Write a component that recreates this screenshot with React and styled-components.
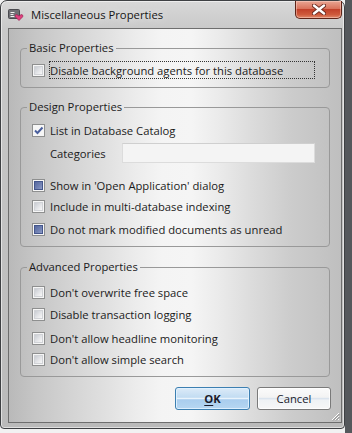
import React from "react";
import styled, { createGlobalStyle, css } from "styled-components";

const GlobalStyle = createGlobalStyle`
  html, body {
    margin: 0;
    padding: 0;
  }
  body {
    width: 352px;
    height: 433px;
    overflow: hidden;
    background: linear-gradient(to right, #f2f2f2 0, #f2f2f2 345px, #55585c 345px);
    font-family: "Open Sans", "Noto Sans", sans-serif;
    color: #1b1b1b;
  }
`;

const Window = styled.div`
  box-sizing: border-box;
  width: 345px;
  height: 429px;
  padding: 0 2px 5px 7px;
  border: 1px solid #3e4043;
  border-radius: 7px 7px 4px 4px;
  background: linear-gradient(to bottom, #d8d8d8 0, #c9c9c9 28px, #c0c0c0 60%, #bababa 100%);
  box-shadow: inset 0 0 0 1px rgba(255, 255, 255, 0.55);
  display: flex;
  flex-direction: column;
`;

const TitleBar = styled.div`
  height: 27px;
  display: flex;
  align-items: center;
  gap: 7px;
`;

const Title = styled.span`
  font-size: 11.3px;
  color: #151515;
  text-shadow: 0 0 8px rgba(255, 255, 255, 0.9);
`;

const CloseButton = styled.div`
  box-sizing: border-box;
  align-self: flex-start;
  margin-left: auto;
  width: 47px;
  height: 18px;
  border: 1px solid #5e2418;
  border-top: none;
  border-radius: 0 0 5px 5px;
  background: linear-gradient(to bottom, #e9a593 0, #d9735c 45%, #c2412a 50%, #cf5a3c 80%, #e08a6c 100%);
  box-shadow: inset 0 0 0 1px rgba(255, 220, 210, 0.45);
  display: grid;
  place-items: center;
`;

const Client = styled.div`
  position: relative;
  flex: 1;
  border: 1px solid #6e6e6e;
  padding: 11px 11px 0 11px;
  display: flex;
  flex-direction: column;
  background: linear-gradient(
    to right,
    #b9b9b9 0%,
    #c6c6c6 8%,
    #d3d3d3 18%,
    #e0e0e0 29%,
    #ececec 38%,
    #f4f4f4 46%,
    #f5f5f5 55%,
    #ebebeb 63%,
    #dcdcdc 73%,
    #cdcdcd 84%,
    #bfbfbf 100%
  );
`;

const Group = styled.fieldset`
  margin: 0 0 ${(p) => p.$mb}px;
  padding: ${(p) => p.$pt}px 0 7px 0;
  min-width: 0;
  border: 1px solid #999;
  border-radius: 4px;
`;

const Legend = styled.legend`
  margin-left: 6px;
  padding: 0 2px;
  font-size: 11.25px;
  line-height: 16px;
`;

const Row = styled.div`
  height: 20px;
  margin-top: ${(p) => p.$mt || 0}px;
  padding-left: ${(p) => (p.$indent ? 29 : 11)}px;
  display: flex;
  align-items: center;
  gap: 5px;
  font-size: 11.25px;
`;

const Label = styled.span`
  white-space: nowrap;
  ${(p) =>
    p.$focus &&
    css`
      box-sizing: border-box;
      width: 266px;
      height: 18px;
      margin-left: -1px;
      border: 1px dotted #333;
      display: flex;
      align-items: center;
    `}
`;

const Box = styled.span`
  box-sizing: border-box;
  flex: none;
  width: 13px;
  height: 13px;
  border: 1px solid #8e8f8f;
  background: #f6f6f6;
  display: grid;
  place-items: center;
`;

const Inner = styled.span`
  box-sizing: border-box;
  width: 9px;
  height: 9px;
  border: 1px solid #d0d2d6;
  background: linear-gradient(135deg, #c9ccd2 0%, #e4e5e8 55%, #f8f8f8 100%);
  ${(p) =>
    p.$filled &&
    css`
      border-color: #44568c;
      background: linear-gradient(135deg, #56699f 0%, #7383b4 60%, #8d9bc6 100%);
    `}
`;

const Field = styled.div`
  box-sizing: border-box;
  width: 193px;
  height: 20px;
  margin-left: auto;
  margin-right: 14px;
  border: 1px solid #dcdcdc;
  border-top-color: #cfcfcf;
  background: #f4f4f4;
`;

const Buttons = styled.div`
  margin-right: -1px;
  display: flex;
  justify-content: flex-end;
  gap: 7px;
`;

const Button = styled.button`
  box-sizing: border-box;
  width: ${(p) => p.$w}px;
  height: 23px;
  padding: 0;
  border-radius: 3px;
  font-family: inherit;
  font-size: 11.25px;
  color: #1b1b2a;
  border: 1px solid #7a7a7a;
  background: linear-gradient(to bottom, #fbfbfb 0, #f3f3f3 44%, #dbe4ee 50%, #eff2f5 58%, #f7f7f7 100%);
  box-shadow: inset 0 0 0 1px rgba(255, 255, 255, 0.8);
  ${(p) =>
    p.$default &&
    css`
      font-weight: 700;
      border-color: #3c7fb1;
      background: linear-gradient(to bottom, #dcebf8 0, #c2dcf2 44%, #eaf4fc 50%, #a9cdee 56%, #b6d6f1 100%);
      box-shadow: inset 0 0 0 1px rgba(225, 242, 255, 0.9);
    `}

  u {
    text-decoration-thickness: 1px;
    text-underline-offset: 2px;
  }
`;

const Grip = styled.svg`
  position: absolute;
  right: 1px;
  bottom: 1px;
`;

const AppIcon = () => (
  <svg width="16" height="13" viewBox="0 0 16 13">
    <rect x="0.5" y="1.5" width="11" height="9" rx="1" fill="#6f6f74" stroke="#4a4a4f" />
    <path d="M2.5 4.5h4M2.5 6.5h3M2.5 8.5h4" stroke="#f1f1f1" strokeWidth="1" />
    <path d="M11 12.5 L7.5 9 C6.5 8 7.5 6 9 6.7 L11 8 L13 6.7 C14.5 6 15.5 8 14.5 9 Z" fill="#e0407e" stroke="#9c1f52" strokeWidth="0.7" />
  </svg>
);

const CloseGlyph = () => (
  <svg width="14" height="11" viewBox="0 0 14 11">
    <path d="M2 1.5 L12 9.5 M12 1.5 L2 9.5" stroke="#6b2a20" strokeWidth="4.2" strokeLinecap="round" />
    <path d="M2 1.5 L12 9.5 M12 1.5 L2 9.5" stroke="#ffffff" strokeWidth="2.4" strokeLinecap="round" />
  </svg>
);

const Check = ({ state }) => (
  <Box>
    {state === "checked" ? (
      <svg width="11" height="11" viewBox="0 0 11 11">
        <path d="M2 5.5 L4.5 8 L9.5 2.5" fill="none" stroke="#4a5f9d" strokeWidth="2" />
      </svg>
    ) : (
      <Inner $filled={state === "filled"} />
    )}
  </Box>
);

const Option = ({ state, children, mt, focus }) => (
  <Row $mt={mt}>
    <Check state={state} />
    <Label $focus={focus}>{children}</Label>
  </Row>
);

const App = () => {
  return (
    <>
      <GlobalStyle />
      <Window>
        <TitleBar>
          <AppIcon />
          <Title>Miscellaneous Properties</Title>
          <CloseButton>
            <CloseGlyph />
          </CloseButton>
        </TitleBar>

        <Client>
          <Group $pt={4} $mb={11}>
            <Legend>Basic Properties</Legend>
            <Option focus>Disable background agents for this database</Option>
          </Group>

          <Group $pt={5} $mb={12}>
            <Legend>Design Properties</Legend>
            <Option state="checked">List in Database Catalog</Option>
            <Row $indent $mt={3}>
              <Label>Categories</Label>
              <Field />
            </Row>
            <Option state="filled" mt={12}>Show in 'Open Application' dialog</Option>
            <Option mt={1}>Include in multi-database indexing</Option>
            <Option state="filled" mt={3}>Do not mark modified documents as unread</Option>
          </Group>

          <Group $pt={7} $mb={10}>
            <Legend>Advanced Properties</Legend>
            <Option>Don't overwrite free space</Option>
            <Option mt={2}>Disable transaction logging</Option>
            <Option mt={4}>Don't allow headline monitoring</Option>
            <Option mt={1}>Don't allow simple search</Option>
          </Group>

          <Buttons>
            <Button $default $w={75}>
              <u>O</u>K
            </Button>
            <Button $w={74}>Cancel</Button>
          </Buttons>

          <Grip width="10" height="10" viewBox="0 0 10 10">
            <path d="M9 2 L2 9 M9 5 L5 9 M9 8 L8 9" stroke="#ffffff" strokeWidth="1" />
            <path d="M9.5 3 L3 9.5 M9.5 6 L6 9.5" stroke="#8a8a8a" strokeWidth="1" />
          </Grip>
        </Client>
      </Window>
    </>
  );
};

export default App;
